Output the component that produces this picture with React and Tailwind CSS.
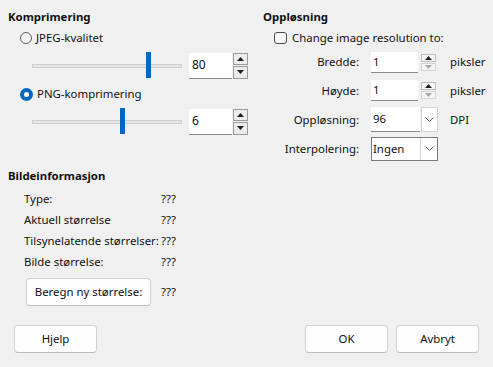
import React from "react";

// Small triangle used in spin buttons
const Arrow = ({ up, disabled }) => (
  <svg width="7" height="4" viewBox="0 0 7 4">
    <polygon
      points={up ? "0,4 7,4 3.5,0" : "0,0 7,0 3.5,4"}
      fill={disabled ? "#a8a8a8" : "#202020"}
    />
  </svg>
);

const Chevron = () => (
  <svg width="9" height="5" viewBox="0 0 9 5">
    <polyline points="0.5,0.5 4.5,4.5 8.5,0.5" fill="none" stroke="#606060" strokeWidth="1" />
  </svg>
);

// Slider with the blue thumb at a pixel offset on the track
const Slider = ({ pos }) => (
  <div className="relative w-[150px] h-[27px] flex items-center">
    <div className="w-full h-[4px] bg-[#e6e6e6] border border-[#cfcfcf]" />
    <div
      className="absolute top-0 w-[5px] h-[26px] bg-[#0067c0]"
      style={{ left: pos }}
    />
  </div>
);

// Spinbox used in the compression rows
const BigSpin = ({ value }) => (
  <div className="flex h-[26px]">
    <div className="w-[43px] h-full bg-white border-b border-[#8a8a8a] flex items-center pl-[3px] text-[12px]">
      {value}
    </div>
    <div className="w-[16px] h-full flex flex-col gap-[1px] pl-[1px]">
      <div className="flex-1 border border-[#9a9a9a] bg-[#ececec] flex items-center justify-center">
        <Arrow up />
      </div>
      <div className="flex-1 border border-[#9a9a9a] bg-[#ececec] flex items-center justify-center">
        <Arrow />
      </div>
    </div>
  </div>
);

// Small spinbox for width / height
const SmallSpin = ({ value }) => (
  <div className="flex items-center h-[21px]">
    <div className="w-[47px] h-[21px] bg-white border-b border-[#8a8a8a] flex items-center pl-[2px]">
      {value}
    </div>
    <div className="ml-[3px] w-[15px] flex flex-col gap-[1px]">
      <div className="h-[8px] border border-[#bdbdbd] bg-[#f4f4f4] flex items-center justify-center">
        <Arrow up />
      </div>
      <div className="h-[8px] border border-[#d4d4d4] bg-[#f4f4f4] flex items-center justify-center">
        <Arrow disabled />
      </div>
    </div>
  </div>
);

const Radio = ({ checked, label }) => (
  <div className="flex items-center h-[18px] pl-[12px] gap-[3px]">
    {checked ? (
      <div className="w-[13px] h-[13px] rounded-full bg-[#0067c0] flex items-center justify-center">
        <div className="w-[5px] h-[5px] rounded-full bg-white" />
      </div>
    ) : (
      <div className="w-[12px] h-[12px] rounded-full border border-[#5a5a5a] bg-[#f7f7f7]" />
    )}
    <span className="ml-[1px]">{label}</span>
  </div>
);

const FormRow = ({ label, h, children, unit }) => (
  <div className={`flex items-center ${h}`}>
    <div className="w-[96px] text-right">{label}</div>
    <div className="ml-[12px] w-[67px]">{children}</div>
    {unit && <span className="ml-[12px]">{unit}</span>}
  </div>
);

const Button = ({ children, className = "" }) => (
  <button
    className={`h-[28px] w-[83px] rounded-[4px] bg-[#fdfdfd] border border-[#d2d2d2] border-b-[#bcbcbc] ${className}`}
  >
    {children}
  </button>
);

const InfoRow = ({ label }) => (
  <div className="flex items-center h-[21px] pl-[16px] whitespace-nowrap">
    <span className="w-[137px]">{label}</span>
    <span>???</span>
  </div>
);

export default function App() {
  return (
    <div className="w-[493px] h-[367px] bg-[#f0f0f0] text-[11.4px] text-[#101010] font-['Noto_Sans',sans-serif] flex flex-col">
      <div className="flex pl-[8px] pt-[8px]">
        {/* Komprimering */}
        <div className="w-[255px]">
          <div className="h-[18px] leading-[18px] font-bold">Komprimering</div>
          <div className="mt-[3px]">
            <Radio label="JPEG-kvalitet" />
          </div>
          <div className="mt-[5px] flex items-center pl-[24px] gap-[7px]">
            <Slider pos={114} />
            <BigSpin value="80" />
          </div>
          <div className="mt-[6px]">
            <Radio checked label="PNG-komprimering" />
          </div>
          <div className="mt-[5px] flex items-center pl-[24px] gap-[7px]">
            <Slider pos={88} />
            <BigSpin value="6" />
          </div>
        </div>

        {/* Oppløsning */}
        <div className="flex-1">
          <div className="h-[18px] leading-[18px] font-bold">Oppløsning</div>
          <div className="mt-[3px] flex items-center h-[18px] pl-[11px] gap-[5px]">
            <div className="w-[13px] h-[12px] rounded-[3px] border border-[#4a4a4a] bg-[#f7f7f7]" />
            <span>Change image resolution to:</span>
          </div>
          <div className="mt-[1px]">
            <FormRow label="Bredde:" h="h-[28px]" unit="piksler">
              <SmallSpin value="1" />
            </FormRow>
            <FormRow label="Høyde:" h="h-[29px]" unit="piksler">
              <SmallSpin value="1" />
            </FormRow>
            <FormRow label="Oppløsning:" h="h-[29px]" unit="DPI">
              <div className="flex h-[25px]">
                <div className="w-[49px] bg-white border-b border-[#8a8a8a] flex items-center pl-[2px]">
                  96
                </div>
                <div className="w-[17px] ml-[1px] bg-white border border-[#d4d4d4] flex items-center justify-center">
                  <Chevron />
                </div>
              </div>
            </FormRow>
            <FormRow label="Interpolering:" h="h-[29px]">
              <div className="flex h-[24px] border border-[#7a7a7a] bg-white">
                <div className="flex-1 flex items-center pl-[1px]">Ingen</div>
                <div className="w-[17px] border-l border-[#d4d4d4] flex items-center justify-center">
                  <Chevron />
                </div>
              </div>
            </FormRow>
          </div>
        </div>
      </div>

      {/* Bildeinformasjon */}
      <div className="pl-[8px] mt-[4px]">
        <div className="h-[18px] leading-[18px] font-bold">Bildeinformasjon</div>
        <div className="mt-[3px]">
          <InfoRow label="Type:" />
          <InfoRow label="Aktuell størrelse" />
          <InfoRow label="Tilsynelatende størrelser:" />
          <InfoRow label="Bilde størrelse:" />
        </div>
        <div className="mt-[6px] flex items-center pl-[18px]">
          <button className="h-[28px] w-[125px] rounded-[4px] bg-[#fdfdfd] border border-[#d2d2d2] border-b-[#bcbcbc] whitespace-nowrap">
            Beregn ny størrelse:
          </button>
          <span className="ml-[10px]">???</span>
        </div>
      </div>

      {/* Bottom buttons */}
      <div className="mt-auto mb-[14px] flex px-[14px]">
        <Button>Hjelp</Button>
        <div className="flex-1" />
        <Button className="border-[#0067c0] border-b-[#0067c0]">OK</Button>
        <Button className="ml-[8px]">Avbryt</Button>
      </div>
    </div>
  );
}
